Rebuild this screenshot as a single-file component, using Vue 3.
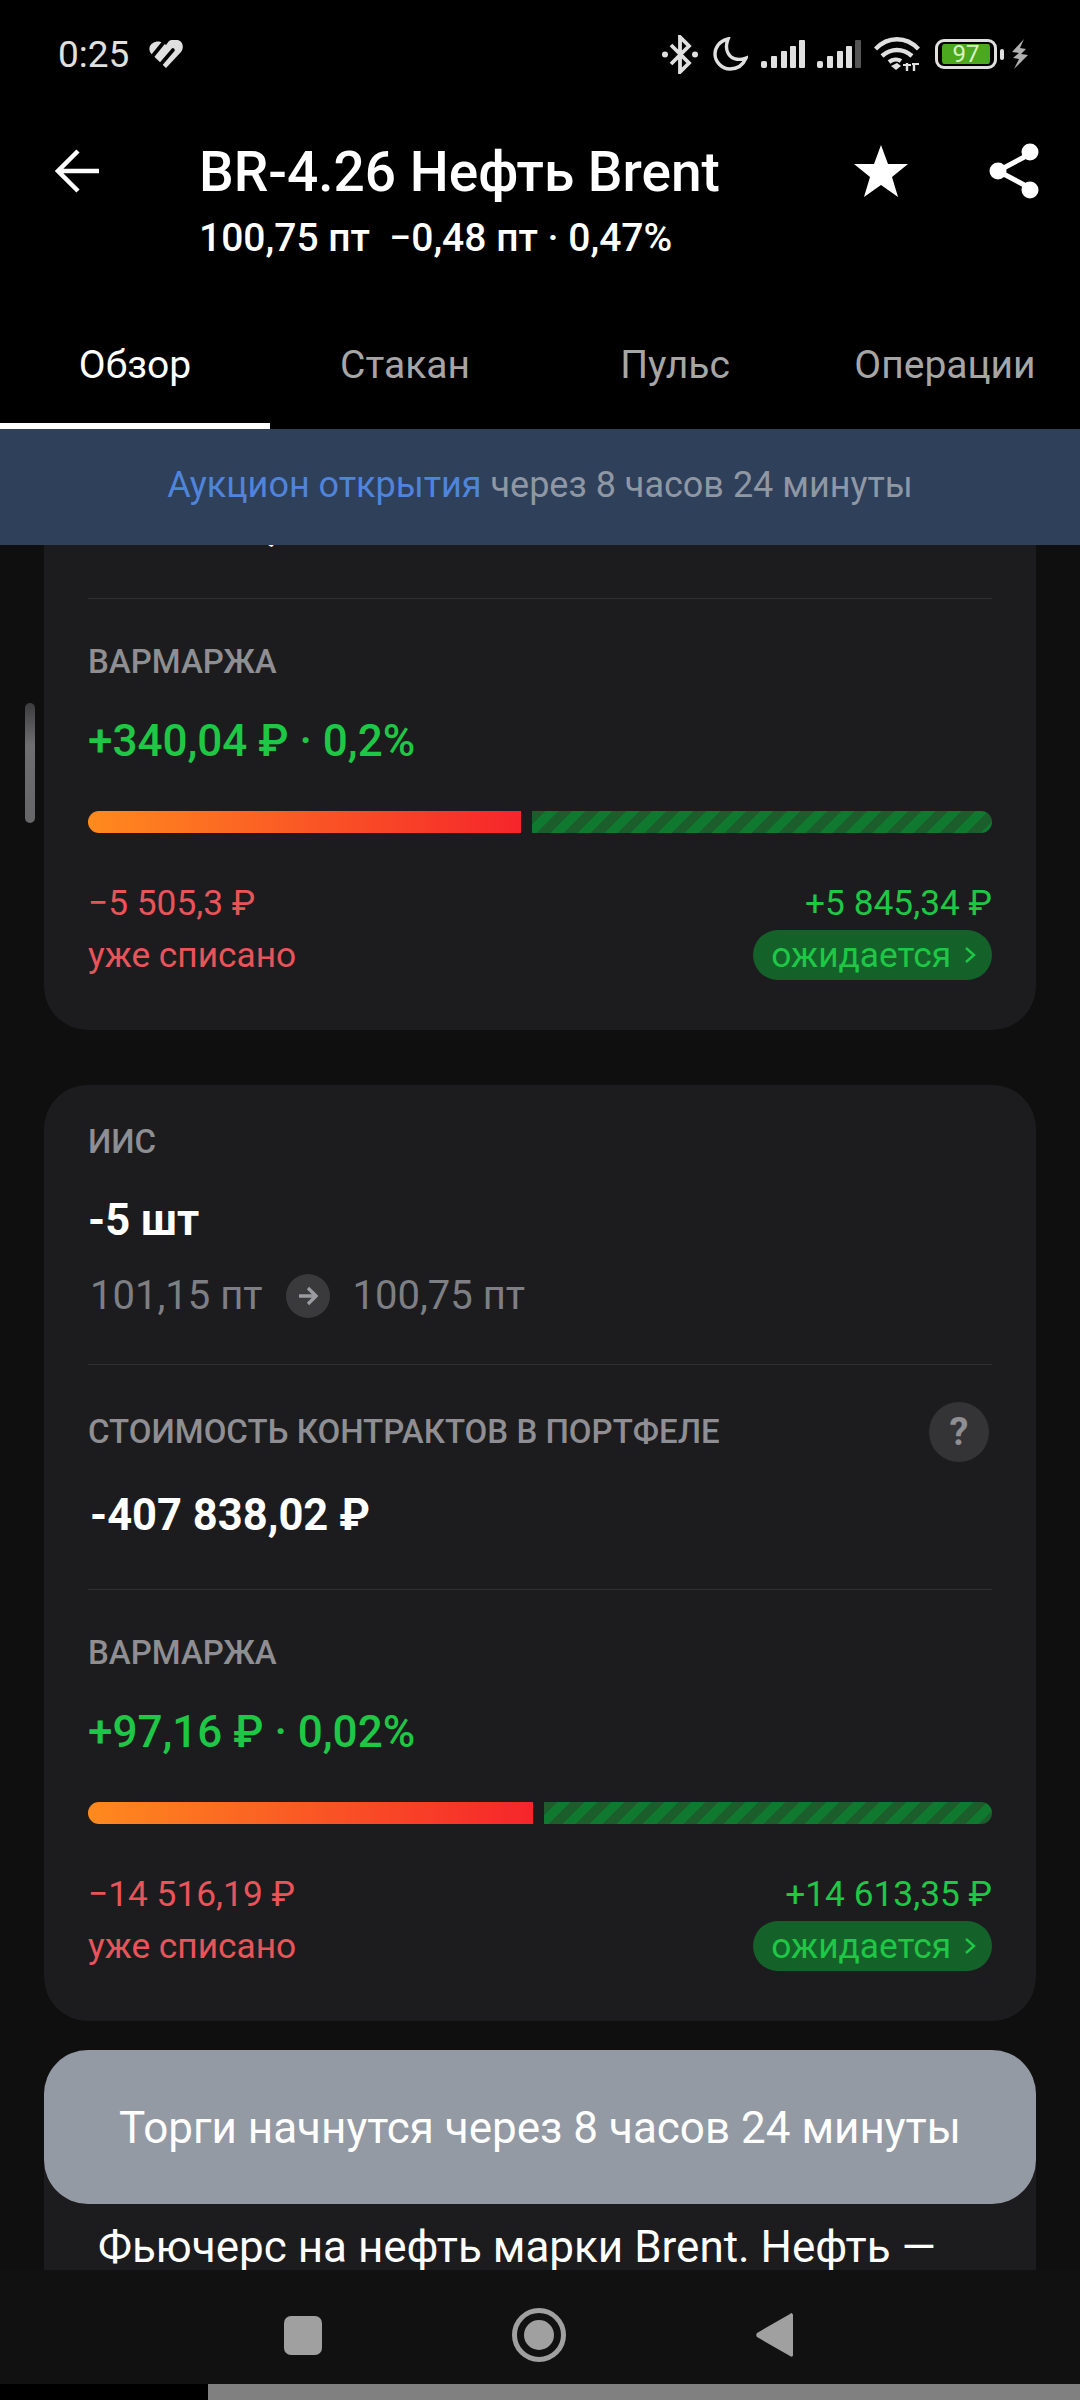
<script setup>
const tabs = ['Обзор', 'Стакан', 'Пульс', 'Операции']

const cards = [
  {
    id: 'brokerage',
    cost: '-163 135,21 ₽',
    margin: '+340,04 ₽ · 0,2%',
    charged: '−5 505,3 ₽',
    expected: '+5 845,34 ₽',
    redWidth: 433
  },
  {
    id: 'iis',
    title: 'ИИС',
    amount: '-5 шт',
    from: '101,15 пт',
    to: '100,75 пт',
    cost: '-407 838,02 ₽',
    margin: '+97,16 ₽ · 0,02%',
    charged: '−14 516,19 ₽',
    expected: '+14 613,35 ₽',
    redWidth: 445
  }
]
</script>

<template>
  <div class="page">
    <div class="status">
      <span class="time">0:25</span>
      <svg class="heart" width="34" height="28" viewBox="0 0 34 28">
        <path d="M17 28 2.500 14C-1 10 0 5 4 3c3-2 7-2 10 0l3 2 3-4c3-2 8-2 11 0 3 2 4 7 1 11z" fill="#e0e0e0" />
        <path d="M2 18 15 2" stroke="#000" stroke-width="3.600" fill="none" />
        <path d="M12 24 24 10" stroke="#000" stroke-width="3.600" stroke-linecap="round" fill="none" />
      </svg>
      <div class="status-icons">
        <svg width="36" height="39" viewBox="0 0 36 39" fill="none" stroke="#e0e0e0" stroke-width="3.800">
          <path d="M9 10 27 28 18 37V2l9 9-18 18" />
          <circle cx="3" cy="19.500" r="3" fill="#e0e0e0" stroke="none" />
          <circle cx="33" cy="19.500" r="3" fill="#e0e0e0" stroke="none" />
        </svg>
        <svg class="moon" width="35" height="34" viewBox="0 0 35 34" fill="none" stroke="#e0e0e0" stroke-width="3.400">
          <path d="M15 2C6 4 2 11 2 17c0 8 7 15 15 15 7 0 13-4 16-11-8 3-15 1-18-5-2-4-2-9 0-14z" />
        </svg>
        <svg class="signal" width="44" height="28" viewBox="0 0 44 28" fill="#e0e0e0">
          <rect x="0" y="21" width="6" height="7" rx="2" />
          <rect x="10" y="16" width="6" height="12" rx="1" />
          <rect x="20" y="11" width="6" height="17" rx="1" />
          <rect x="29" y="6" width="6" height="22" rx="1" />
          <rect x="38" y="0" width="6" height="28" rx="1" />
        </svg>
        <svg class="signal second" width="44" height="28" viewBox="0 0 44 28" fill="#e0e0e0">
          <rect x="0" y="21" width="6" height="7" rx="2" />
          <rect x="10" y="16" width="6" height="12" rx="1" />
          <rect x="20" y="11" width="6" height="17" rx="1" />
          <rect x="29" y="6" width="6" height="22" rx="1" />
          <rect x="38" y="0" width="6" height="28" rx="1" fill="#555" />
        </svg>
        <svg class="wifi" width="46" height="34" viewBox="0 0 46 34" fill="none" stroke="#e0e0e0" stroke-width="4.400">
          <path d="M1.500 12C14 -1 32 -1 44.500 12M8 19c9-8 21-8 30 0M15 25c4-3 9-3 12-1" />
          <path d="M17 29l6-3 4 3-5 4z" fill="#e0e0e0" stroke="none" />
          <path d="M33 34v-8M40 34v-8" stroke-width="2.400" />
          <path d="M29 28h8M38 27h7" stroke-width="2" />
        </svg>
        <div class="battery"><span>97</span></div>
        <i class="battery-tip"></i>
        <svg class="bolt" width="18" height="30" viewBox="0 0 18 30" fill="#b0b0b0">
          <path d="M13 0 1 13l7 1-6 5 6 1-5 10 14-14-7-1 5-5-6-1z" />
        </svg>
      </div>
    </div>

    <header class="header">
      <svg class="back" width="44" height="44" viewBox="0 0 44 44" fill="none" stroke="#fff" stroke-width="4.500">
        <path d="M44 22H4M23 2 3 22l20 20" />
      </svg>
      <div class="titles">
        <div class="title">BR-4.26 Нефть Brent</div>
        <div class="subtitle">100,75 пт&nbsp; −0,48 пт · 0,47%</div>
      </div>
      <svg class="star" width="54" height="52" viewBox="0 0 54 52" fill="#fff">
        <path d="M27 0l7 19h20L38 32l6 20-17-12-17 12 6-20L0 19h20z" />
      </svg>
      <svg class="share" width="50" height="56" viewBox="0 0 50 56">
        <path d="M41 11 9 28l32 17" fill="none" stroke="#fff" stroke-width="5" />
        <circle cx="41" cy="9" r="8.500" fill="#fff" />
        <circle cx="9" cy="28" r="8.500" fill="#fff" />
        <circle cx="41" cy="47" r="8.500" fill="#fff" />
      </svg>
    </header>

    <nav class="tabs">
      <div v-for="(tab, i) in tabs" :key="tab" class="tab" :class="{ active: i === 0 }">{{ tab }}</div>
    </nav>

    <div class="banner">
      <span class="banner-link">Аукцион открытия</span> через 8 часов 24 минуты
    </div>

    <main class="scroll">
      <div class="scrollbar"></div>
      <div class="scroll-inner">
        <section v-for="card in cards" :key="card.id" class="card">
          <div v-if="card.title" class="part part-position">
            <div class="label">{{ card.title }}</div>
            <div class="amount">{{ card.amount }}</div>
            <div class="prices">
              <span>{{ card.from }}</span>
              <span class="arrow">
                <svg width="20" height="20" viewBox="0 0 20 20" fill="none" stroke="#9a9ba1" stroke-width="3.400">
                  <path d="M1 10h16M10 2l8 8-8 8" />
                </svg>
              </span>
              <span>{{ card.to }}</span>
            </div>
          </div>

          <div class="part part-cost">
            <!-- first card is scrolled, its head sits above the visible area -->
            <div v-if="card.title" class="cost-head">
              <div class="label">Стоимость контрактов в портфеле</div>
              <div class="help">?</div>
            </div>
            <div class="cost">{{ card.cost }}</div>
          </div>

          <div class="part part-margin">
            <div class="label">Вармаржа</div>
            <div class="margin">{{ card.margin }}</div>
            <div class="bar">
              <div class="bar-red" :style="{ width: card.redWidth + 'px' }"></div>
              <div class="bar-green"></div>
            </div>
            <div class="totals">
              <div class="total-col red">
                <div class="total-sum">{{ card.charged }}</div>
                <div class="total-note">уже списано</div>
              </div>
              <div class="total-col green">
                <div class="total-sum">{{ card.expected }}</div>
                <div class="pill">
                  ожидается
                  <svg width="12" height="18" viewBox="0 0 12 18" fill="none" stroke="#1ec745" stroke-width="2.400">
                    <path d="M2 2l8 7-8 7" />
                  </svg>
                </div>
              </div>
            </div>
          </div>
        </section>

        <section class="card about">
          Фьючерс на нефть марки Brent. Нефть —
        </section>
      </div>
    </main>

    <div class="toast">Торги начнутся через 8 часов 24 минуты</div>

    <div class="navbar">
      <i class="nav-square"></i>
      <svg width="54" height="54" viewBox="0 0 54 54">
        <circle cx="27" cy="27" r="24.500" fill="none" stroke="#a0a0a0" stroke-width="5" />
        <circle cx="27" cy="27" r="15" fill="#a0a0a0" />
      </svg>
      <svg width="37" height="44" viewBox="0 0 37 44" fill="#a0a0a0">
        <path d="M35 0c1 0 2 1 2 2v40c0 2-2 2-3 1L1 24c-1-1-1-3 0-4L34 1z" />
      </svg>
    </div>
    <div class="home-bar"></div>
  </div>
</template>

<style scoped>
.page {
  position: relative;
  width: 1080px;
  height: 2400px;
  overflow: hidden;
  background: #000;
  color: #fff;
  font-family: Roboto, "Liberation Sans", sans-serif;
}

.status {
  display: flex;
  align-items: center;
  height: 108px;
  padding: 0 51px 0 58px;
  box-sizing: border-box;
}

.time {
  font-size: 37px;
  color: #e0e0e0;
}

.heart {
  margin-left: 20px;
}

.status-icons {
  display: flex;
  align-items: center;
  margin-left: auto;
}

.moon {
  margin-left: 15px;
}

.signal {
  margin-left: 13px;
}

.signal.second {
  margin-left: 12px;
}

.wifi {
  margin-left: 13px;
}

.battery {
  display: flex;
  align-items: center;
  justify-content: center;
  width: 62px;
  height: 30px;
  margin-left: 15px;
  box-sizing: border-box;
  border: 3px solid #e0e0e0;
  border-radius: 9px;
  background: #4ca81f content-box;
  padding: 2px 4px;
  font-size: 24px;
  color: #d9f2c8;
}

.battery-tip {
  width: 4px;
  height: 11px;
  margin-left: 3px;
  border-radius: 2px;
  background: #e0e0e0;
}

.bolt {
  margin-left: 7px;
}

.header {
  display: flex;
  align-items: flex-start;
  height: 192px;
  box-sizing: border-box;
  padding-top: 35px;
}

.back {
  margin: 6px 0 0 55px;
}

.titles {
  width: 655px;
  margin-left: 100px;
}

.title {
  font-size: 55px;
  font-weight: 500;
  line-height: 58px;
}

.subtitle {
  margin-top: 12px;
  font-size: 39px;
  font-weight: 500;
  line-height: 50px;
  white-space: nowrap;
}

.star {
  margin-top: 2px;
}

.share {
  margin: 0 0 0 81px;
}

.tabs {
  display: flex;
  height: 129px;
}

.tab {
  width: 270px;
  height: 129px;
  box-sizing: border-box;
  padding-top: 41px;
  font-size: 39px;
  line-height: 48px;
  text-align: center;
  color: #a6a6a6;
}

.tab.active {
  border-bottom: 6px solid #fff;
  color: #fff;
}

.banner {
  height: 116px;
  background: #2f405b;
  font-size: 36px;
  line-height: 112px;
  text-align: center;
  color: #8f97a3;
}

.banner-link {
  color: #4f84dc;
}

.scroll {
  position: relative;
  height: 1725px;
  overflow: hidden;
  background: #0f0f10;
}

.scrollbar {
  position: absolute;
  left: 25px;
  top: 158px;
  width: 10px;
  height: 120px;
  border-radius: 5px;
  background: linear-gradient(#3c3c3e, #6e6e70 35%, #666668);
}

.scroll-inner {
  display: flex;
  flex-direction: column;
  gap: 55px;
  margin: -172px 44px 0;
}

.card {
  padding: 0 44px;
  border-radius: 44px;
  background: #1c1c1e;
}

.part + .part {
  border-top: 1px solid #303032;
}

.label {
  font-size: 33px;
  font-weight: 500;
  line-height: 40px;
  text-transform: uppercase;
  color: #8e8e93;
}

.part-position {
  height: 279px;
  box-sizing: border-box;
  padding-top: 37px;
}

.amount {
  margin-top: 34px;
  font-size: 43.500px;
  font-weight: 700;
  line-height: 50px;
}

.prices {
  display: flex;
  align-items: center;
  gap: 23px;
  margin-top: 25px;
  padding-left: 2px;
  font-size: 40px;
  line-height: 50px;
  color: #7e7f85;
}

.arrow {
  display: flex;
  align-items: center;
  justify-content: center;
  width: 44px;
  height: 44px;
  border-radius: 50%;
  background: #3a3a3c;
}

.part-cost {
  display: flex;
  flex-direction: column;
  justify-content: flex-end;
  height: 225px;
  box-sizing: border-box;
  padding-bottom: 48px;
}

.cost-head {
  display: flex;
  align-items: center;
  justify-content: space-between;
  height: 60px;
  padding-right: 3px;
}

.help {
  width: 60px;
  height: 60px;
  border-radius: 50%;
  background: #343436;
  font-size: 38px;
  font-weight: 700;
  line-height: 60px;
  text-align: center;
  color: #8e8e93;
}

.cost {
  margin-top: 29px;
  padding-left: 2px;
  font-size: 43.500px;
  font-weight: 700;
  line-height: 50px;
}

.part-margin {
  padding-top: 43px;
  padding-bottom: 50px;
}

.margin {
  margin-top: 34px;
  font-size: 44px;
  font-weight: 500;
  line-height: 50px;
  color: #1ec745;
}

.bar {
  display: flex;
  gap: 11px;
  height: 22px;
  margin-top: 45px;
}

.bar-red {
  border-radius: 11px 0 0 11px;
  background: linear-gradient(90deg, #ff8a1e, #f5252b);
}

.bar-green {
  flex: 1;
  border-radius: 0 11px 11px 0;
  background: repeating-linear-gradient(135deg, #1b5e2c 0 9.500px, #0f7a2f 9.500px 19px);
}

.totals {
  display: flex;
  justify-content: space-between;
  margin-top: 50px;
}

.total-col {
  display: flex;
  flex-direction: column;
}

.total-col.red {
  color: #e8545a;
}

.total-col.green {
  align-items: flex-end;
  color: #1ec745;
}

.total-sum {
  font-size: 35.300px;
  line-height: 40px;
}

.total-note {
  margin-top: 12px;
  font-size: 35.300px;
  line-height: 40px;
}

.pill {
  display: flex;
  align-items: center;
  gap: 13px;
  height: 50px;
  margin-top: 7px;
  padding: 0 16px 0 18px;
  border-radius: 25px;
  background: #14622a;
  font-size: 35.300px;
}

.about {
  height: 260px;
  box-sizing: border-box;
  padding: 143px 0 0 54px;
  font-size: 44px;
  line-height: 56px;
  white-space: nowrap;
}

.toast {
  position: absolute;
  left: 44px;
  top: 2050px;
  width: 992px;
  height: 154px;
  border-radius: 44px;
  background: #949aa4;
  font-size: 44px;
  line-height: 156px;
  text-align: center;
}

.navbar {
  display: flex;
  align-items: center;
  gap: 190px;
  height: 114px;
  box-sizing: border-box;
  padding: 16px 0 0 284px;
  background: #111112;
}

.nav-square {
  width: 38px;
  height: 39px;
  border-radius: 7px;
  background: #a0a0a0;
}

.home-bar {
  height: 16px;
  margin-left: 208px;
  background: #808080;
}
</style>

<style>
html,
body {
  background: #000;
}
</style>
